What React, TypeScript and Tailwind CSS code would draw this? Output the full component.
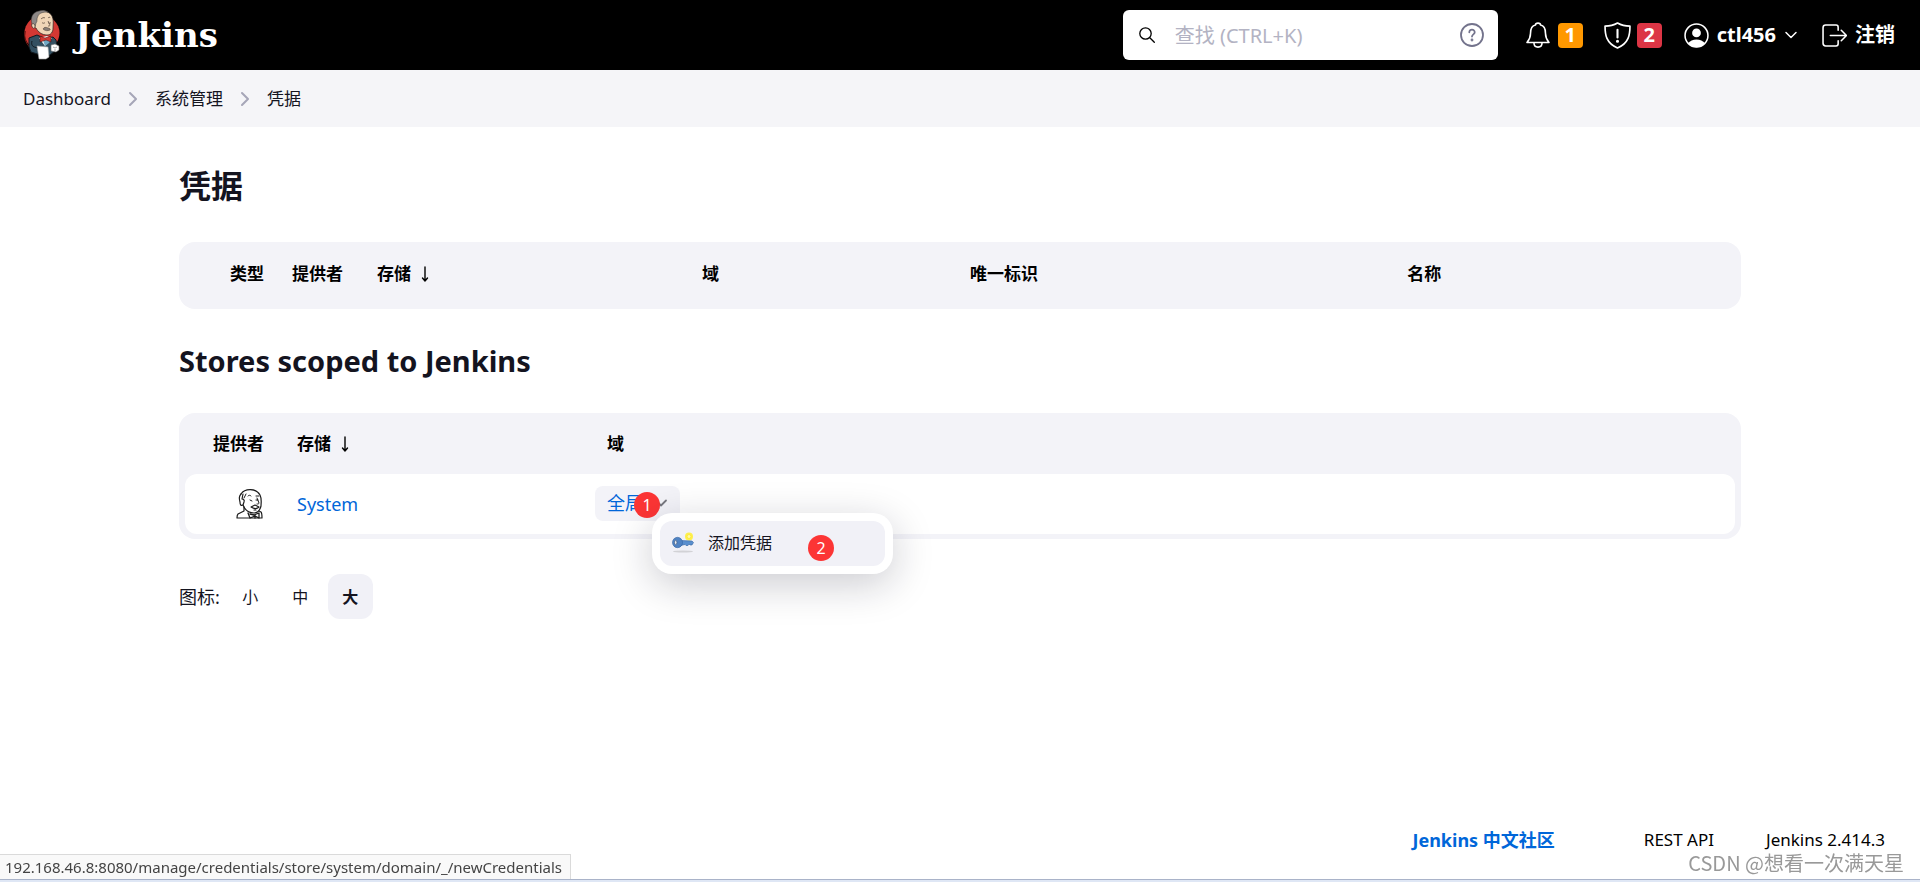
import type { ReactNode } from "react";

function JenkinsLogo() {
  return (
    <svg viewBox="0 0 36 50" className="h-[50px] w-9" aria-hidden="true">
      <circle cx="18" cy="23" r="17.5" fill="#d33833" />
      <path d="M1.5 21a17 17 0 0 0 4 16" fill="none" stroke="#7d1b17" strokeWidth="1" />
      <path d="M5 28l8-3 9 4 7-2 3 3 1 6-2 5-5 4-6 1-13-4-2-5z" fill="#335061" stroke="#10191f" strokeWidth="1" />
      <path d="M15 28l6 8 7-8-5-2z" fill="#f5f5f5" />
      <path d="M19 30l2 6 4-3 2-3-4-1z" fill="#6fa8c4" />
      <path d="M9 14c-1-5 1-10 6-12 5-2 11 0 13 4 2 4 1 8 1 12 0 4-2 7-6 7-5 0-9-3-11-7-2 0-3-2-3-4z" fill="#f0d6b7" stroke="#231f20" strokeWidth="0.7" />
      <path d="M8 14C6 7 9 2 15 1c3-1 6-1 9 1-5 0-9 1-10 4-2 3 0 5-2 7l-1 4c-2 0-3-1-3-3z" fill="#8d8886" stroke="#3a3635" strokeWidth="0.5" />
      <path d="M8 14c1-1 3 0 3 2s-1 3-2 2-2-3-1-4z" fill="#f0d6b7" stroke="#231f20" strokeWidth="0.6" />
      <path d="M17 9c1-1 3-2 4-1M24 8c1-1 2-1 2 0M18 12.500c1 1 2 1 3 0M24 12.500c1 1 2 1 3 0M24 11l2 4c0 1-1 1-2 1" fill="none" stroke="#4a3b30" strokeWidth="0.7" />
      <path d="M19 19c1-2 3-2 5-1 1 0 3 1 2 2-2 1-5 1-7-1z" fill="#8a7f77" stroke="#4a3b30" strokeWidth="0.5" />
      <path d="M16 26l5 2 6-2v6l-5-2-6 2z" fill="#d33833" stroke="#3b0f0d" strokeWidth="0.5" />
      <path d="M8 31c-1 4 0 6 6 7" fill="none" stroke="#10191f" strokeWidth="1" />
      <path d="M13 36l11 1 1 10-3 2h-7z" fill="#fff" stroke="#a9a9a9" strokeWidth="0.6" />
      <path d="M27 35l4-1 4 2v4l-3 2-5-1z" fill="#fff" stroke="#6b6b6b" strokeWidth="0.6" />
      <path d="M29 37l2 1 2-1M30 40h2" stroke="#777" strokeWidth="0.6" fill="none" />
    </svg>
  );
}

function ButlerIcon() {
  return (
    <svg viewBox="0 0 27 30" className="h-[30px] w-[27px]" fill="none" stroke="#1b1b1b" strokeWidth="1.200" strokeLinecap="round" strokeLinejoin="round" aria-hidden="true">
      <path d="M5 5C9-1 20-1 24 6c2 4 1 8 1 11-1 4-3 7-7 7-5 0-9-3-11-8" />
      <path d="M5 5c-2 2-2 5-1 8 0 3 1 4 3 3l1-3c1-2-1-3-2-3l1-5" />
      <path d="M8 9l2-4" strokeWidth="1" />
      <path d="M12 7c1-1 2-1 3 0M20 7h3M14 11l2 1M20 11h2M21 9l2 5c0 1-1 1-2 1" strokeWidth="1" />
      <path d="M15 18l4-2 4 2c-2 2-5 2-8 0zM18 21h2" strokeWidth="1.100" />
      <path d="M8 18v4l-6 3c-1 1-1 3-1 4h25c0-2 0-5-1-6l-2-1" />
      <path d="M12 24l2 5M14 25l4 1 5-2v5l-4-2-5 2M19 26v3" strokeWidth="1.300" />
    </svg>
  );
}

function KeyIcon() {
  return (
    <svg viewBox="0 0 22 22" className="h-[22px] w-[22px]" aria-hidden="true">
      <ellipse cx="11" cy="19.500" rx="10" ry="1" fill="#d2d2d6" />
      <circle cx="17" cy="4.500" r="4" fill="#fdf04e" />
      <circle cx="17" cy="4.500" r="2" fill="#fff9a8" stroke="#ffe93a" strokeWidth="1" />
      <path d="M9 8.500l11 .5 1.500 1.500L20 13h-2l-1-1-1 1.500h-2l-1-1-4 1z" fill="#5a8fce" stroke="#3564a3" strokeWidth="0.6" />
      <ellipse cx="5.500" cy="10.500" rx="5" ry="5.200" fill="#5083c3" stroke="#3564a3" strokeWidth="0.6" />
      <ellipse cx="3.700" cy="10.500" rx="1.200" ry="2.200" fill="#e9eef6" stroke="#3a4f70" strokeWidth="0.6" />
    </svg>
  );
}

function Stroke({ children, className, box = "0 0 24 24", width = 1.5 }: { children: ReactNode; className: string; box?: string; width?: number }) {
  return (
    <svg viewBox={box} className={className} fill="none" stroke="currentColor" strokeWidth={width} strokeLinecap="round" strokeLinejoin="round" aria-hidden="true">
      {children}
    </svg>
  );
}

function Crumb() {
  return (
    <Stroke className="h-4 w-2" box="0 0 8 16" width={2}>
      <path d="M1 2l6 6-6 6" stroke="#a6a6b8" />
    </Stroke>
  );
}

function SortArrow() {
  return (
    <Stroke className="ml-2.5 h-4 w-2" box="0 0 8 16" width={1.4}>
      <path d="M4 1v14M1.500 12l2.500 3 2.500-3" />
    </Stroke>
  );
}

function Header() {
  return (
    <header className="flex h-[70px] items-center justify-between bg-black pl-6 pr-[25px] text-white">
      <a href="#home" className="flex items-center">
        <JenkinsLogo />
        <span className="ml-[15px] font-['DejaVu_Serif','Liberation_Serif',serif] text-[34px] font-bold leading-none">Jenkins</span>
      </a>
      <div className="flex items-center text-xl font-bold">
        <div className="mr-7 flex h-[50px] w-[375px] items-center rounded-md bg-white pl-4 pr-3.5 text-black">
          <Stroke className="h-4 w-4 shrink-0" box="0 0 16 16" width={1.3}>
            <circle cx="6.500" cy="6.500" r="5.700" />
            <path d="M10.800 10.800l4.500 4.500" />
          </Stroke>
          <input type="search" aria-label="查找" placeholder="查找 (CTRL+K)" className="ml-5 h-10 min-w-0 flex-1 bg-transparent text-xl font-normal outline-none placeholder:text-[#b3b3c3]" />
          <Stroke className="h-6 w-6 shrink-0 text-[#73738c]" width={1.8}>
            <circle cx="12" cy="12" r="11" />
            <path d="M9.300 9.300c0-3.600 5.500-3.300 5.400 0 0 2-2.700 2.200-2.700 4.200" />
            <circle cx="12" cy="17" r="0.500" fill="currentColor" />
          </Stroke>
        </div>
        <button type="button" aria-label="通知" className="mr-[21px] flex items-center gap-2">
          <Stroke className="h-[26px] w-6" box="1 0 24 26" width={1.6}>
            <path d="M2 20.500h22c-2.500-3-3.500-5-3.500-9C20.500 6.500 19 3.500 15.500 3c0-2.500-5-2.500-5 0C7 3.500 5.500 6.500 5.500 11.500c0 4-1 6-3.500 9z" />
            <path d="M9 21c0 5.500 8 5.500 8 0" />
          </Stroke>
          <span className="flex h-[25px] w-[25px] items-center justify-center rounded bg-[#ff9800]">1</span>
        </button>
        <button type="button" aria-label="安全警告" className="mr-[22px] flex items-center gap-1.5">
          <Stroke className="h-[27px] w-[27px]" box="0 0 26 26" width={1.6}>
            <path d="M13 1C9.500 3 5 4 1 4c0 8 1 16.500 12 21C24 20.500 25 12 25 4c-4 0-8.500-1-12-3z" />
            <path d="M13 7.500v7.500" strokeWidth="2" />
            <circle cx="13" cy="18.500" r="0.700" fill="currentColor" />
          </Stroke>
          <span className="flex h-[25px] w-[25px] items-center justify-center rounded bg-[#dc3545]">2</span>
        </button>
        <button type="button" className="mr-6 flex items-center">
          <svg viewBox="0 0 24 24" className="h-[25px] w-[25px]" aria-hidden="true">
            <circle cx="12" cy="12" r="11" fill="none" stroke="currentColor" strokeWidth="1.500" />
            <circle cx="12" cy="9.500" r="4.200" fill="currentColor" />
            <path d="M4 19.500c3-5 13-5 16 0-4 5-12 5-16 0z" fill="currentColor" />
          </svg>
          <span className="ml-2">ctl456</span>
          <Stroke className="ml-2 h-3.5 w-3.5" box="0 0 14 14" width={1.5}>
            <path d="M2 4.500l5 5 5-5" />
          </Stroke>
        </button>
        <a href="#logout" className="flex items-center gap-2">
          <Stroke className="h-[25px] w-[25px]" box="0 0 24 24" width={1.5}>
            <path d="M15.500 7V4c0-1.500-.5-2-2-2h-10C2 2 1 3 1 4.500v15C1 21 2 22 3.500 22h10c1.500 0 2-.5 2-2v-3" />
            <path d="M8 12h15M18.500 7l5 5-5 5" />
          </Stroke>
          注销
        </a>
      </div>
    </header>
  );
}

function Marker({ children, className }: { children: ReactNode; className: string }) {
  return (
    <span className={`pointer-events-none absolute flex h-[26px] w-[26px] items-center justify-center rounded-full bg-[#fc3535] text-base leading-none text-white ${className}`}>
      {children}
    </span>
  );
}

function CredentialsTable() {
  return (
    <div className="mt-8 h-[67px] rounded-2xl bg-[#f3f3f8]">
      <table className="w-full table-fixed text-left text-[17px] leading-6 text-black">
        <colgroup>
          <col className="w-[113px]" />
          <col className="w-[85px]" />
          <col className="w-[325px]" />
          <col className="w-[268px]" />
          <col className="w-[28%]" />
          <col />
        </colgroup>
        <thead>
          <tr className="h-16 [&>th]:p-0">
            <th><span className="pl-[51px]">类型</span></th>
            <th>提供者</th>
            <th><span className="flex items-center">存储<SortArrow /></span></th>
            <th>域</th>
            <th>唯一标识</th>
            <th>名称</th>
          </tr>
        </thead>
      </table>
    </div>
  );
}

function StoresTable() {
  return (
    <div className="mt-8 rounded-2xl bg-[#f3f3f8] px-1.5 pb-[5px]">
      <table className="w-full table-fixed border-separate border-spacing-0 text-left text-[17px] leading-6 text-black">
        <colgroup>
          <col className="w-28" />
          <col className="w-[298px]" />
          <col />
        </colgroup>
        <thead>
          <tr className="h-[61px] [&>th]:p-0">
            <th><span className="pl-7">提供者</span></th>
            <th><span className="flex items-center">存储<SortArrow /></span></th>
            <th><span className="pl-3">域</span></th>
          </tr>
        </thead>
        <tbody>
          <tr className="h-[60px] [&>td]:bg-white [&>td]:p-0">
            <td className="rounded-l-xl"><div className="flex pl-[51px]"><ButlerIcon /></div></td>
            <td><a href="#system" className="text-lg text-[#0066d9]">System</a></td>
            <td className="rounded-r-xl">
              <div className="relative mb-0.5 w-[85px]">
                <button type="button" className="flex h-[35px] w-full items-center justify-between rounded-lg bg-[#f3f3f8] px-3 text-lg text-[#0066d9]">
                  全局
                  <Stroke className="h-3.5 w-3.5" box="0 0 14 14" width={1.8}>
                    <path d="M2 4.500l5 5 5-5" stroke="#77777f" />
                  </Stroke>
                </button>
                <Marker className="left-[39px] top-1.5">1</Marker>
                <div className="absolute left-[57px] top-[27px] z-10 w-[241px] rounded-[20px] bg-white p-2 shadow-[0_10px_40px_rgba(20,20,40,0.22)]">
                  <a href="#new-credentials" className="flex h-[45px] items-center gap-3.5 rounded-xl bg-[#f1f1f7] pl-3 text-base text-[#14141f]">
                    <KeyIcon />
                    添加凭据
                  </a>
                  <Marker className="left-[156px] top-[22px]">2</Marker>
                </div>
              </div>
            </td>
          </tr>
        </tbody>
      </table>
    </div>
  );
}

export default function App() {
  return (
    <div className="flex min-h-screen flex-col bg-white font-['Noto_Sans','Noto_Sans_CJK_SC',sans-serif] text-[#14141f]">
      <Header />
      <nav aria-label="Breadcrumb" className="flex h-[57px] items-center gap-[18px] bg-[#f5f5f8] pl-[23px] text-[17px]">
        <a href="#dashboard">Dashboard</a>
        <Crumb />
        <a href="#manage">系统管理</a>
        <Crumb />
        <a href="#credentials">凭据</a>
      </nav>
      <main className="mx-auto w-full max-w-[1562px] flex-1 pt-9">
        <h1 className="text-[32px] font-bold leading-[45px]">凭据</h1>
        <div className="h-0.5" />
        <CredentialsTable />
        <h2 className="mt-8 text-[29px] font-bold leading-10">Stores scoped to Jenkins</h2>
        <StoresTable />
        <div className="mt-[35px] flex items-center text-lg">
          <span className="mr-2">图标:</span>
          <div className="flex gap-[5px] text-base">
            <button type="button" className="h-[45px] w-[45px] rounded-xl">小</button>
            <button type="button" className="h-[45px] w-[45px] rounded-xl">中</button>
            <button type="button" className="h-[45px] w-[45px] rounded-xl bg-[#f1f1f7] font-bold">大</button>
          </div>
        </div>
      </main>
      <footer className="mb-7 flex h-7 items-center justify-end pr-[35px] text-[17px] text-black">
        <a href="#community" className="mr-[89px] text-lg font-bold text-[#0066d9]">Jenkins 中文社区</a>
        <a href="#api" className="mr-[52px]">REST API</a>
        <span>Jenkins 2.414.3</span>
      </footer>
      <div className="pointer-events-none fixed inset-x-0 bottom-0">
        <div className="flex items-end justify-between">
          <span className="border-r border-t border-[#dadada] bg-[#f9f9f9] pl-[5px] pr-2 text-[15px] leading-6 text-[#444]">
            192.168.46.8:8080/manage/credentials/store/system/domain/_/newCredentials
          </span>
          <span className="pr-4 font-['Noto_Sans_CJK_SC',sans-serif] text-xl leading-8 text-[#999]">CSDN @想看一次满天星</span>
        </div>
        <div className="h-[3px] border-t border-[#a9b3c9] bg-[#dfe7f5]" />
      </div>
    </div>
  );
}
